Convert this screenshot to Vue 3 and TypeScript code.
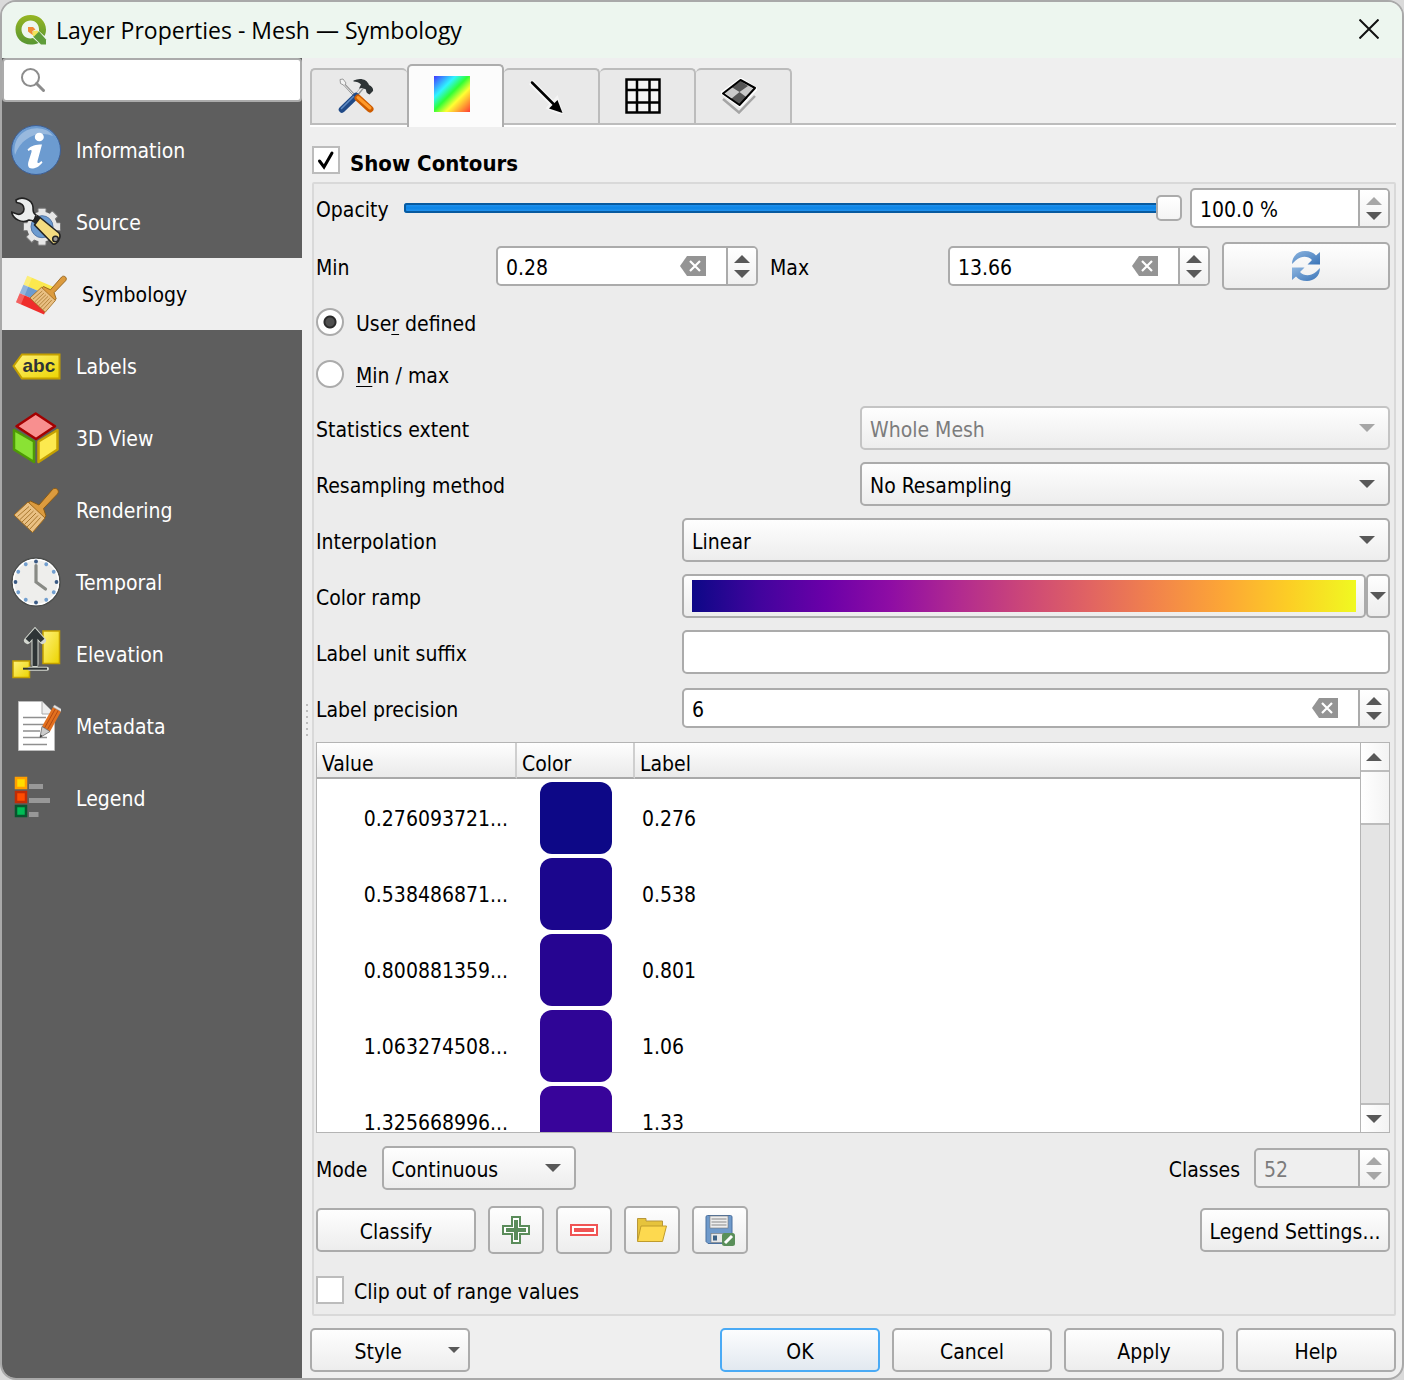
<script setup lang="ts">
import { ref } from 'vue'

interface NavItem {
  id: string
  label: string
}

interface RampRow {
  value: string
  color: string
  label: string
}

const navItems: NavItem[] = [
  { id: 'information', label: 'Information' },
  { id: 'source', label: 'Source' },
  { id: 'symbology', label: 'Symbology' },
  { id: 'labels', label: 'Labels' },
  { id: 'view3d', label: '3D View' },
  { id: 'rendering', label: 'Rendering' },
  { id: 'temporal', label: 'Temporal' },
  { id: 'elevation', label: 'Elevation' },
  { id: 'metadata', label: 'Metadata' },
  { id: 'legend', label: 'Legend' },
]

const tabs: NavItem[] = [
  { id: 'settings', label: 'Settings' },
  { id: 'contours', label: 'Contours' },
  { id: 'vectors', label: 'Vectors' },
  { id: 'rendering', label: 'Mesh rendering' },
  { id: 'averaging', label: 'Averaging' },
]

const rows: RampRow[] = [
  { value: '0.276093721...', color: '#0d0887', label: '0.276' },
  { value: '0.538486871...', color: '#1b068d', label: '0.538' },
  { value: '0.800881359...', color: '#260591', label: '0.801' },
  { value: '1.063274508...', color: '#2f0596', label: '1.06' },
  { value: '1.325668996...', color: '#38049a', label: '1.33' },
]

const activeNav = ref('symbology')
const activeTab = ref('contours')
const search = ref('')
const showContours = ref(true)
const opacity = ref(100)
const min = ref('0.28')
const max = ref('13.66')
const extentMode = ref('user')
const suffix = ref('')
const precision = ref('6')
const clip = ref(false)

const gearTeeth = [0, 45, 90, 135, 180, 225, 270, 315]
const clockMarks = [0, 30, 60, 90, 120, 150, 180, 210, 240, 270, 300, 330]
</script>

<template>
  <div class="dialog">
    <header class="titlebar">
      <svg class="logo" viewBox="0 0 32 32" aria-hidden="true">
        <defs>
          <linearGradient id="q-green" x1="0" y1="0" x2="0" y2="1">
            <stop offset="0" stop-color="#96b522" />
            <stop offset="1" stop-color="#579632" />
          </linearGradient>
        </defs>
        <path
          d="M15.500 1C24 1 31 7 31 15.500C31 18 30.500 20 29.500 22L24 17C24.500 11 21 6.500 15.500 6.500C10.500 6.500 6.500 10.500 6.500 15.500C6.500 20.500 10.500 24.500 15.500 24.500L18 24L23.500 29C21 30 18.500 30.500 15.500 30.500C7 30.500 .5 24 .5 15.500C.5 7 7 1 15.500 1Z"
          fill="url(#q-green)"
        />
        <path d="M21 18L24 17.500L31 25.500V30.500H26L18.500 23V20Z" fill="#5f9d3a" />
        <path d="M18 17L22.500 16.500L23.500 18L19 22.500L17 20.500Z" fill="#f3e35a" />
        <path d="M13 13H18L20.500 15.500L17.500 17V21L13 17.500Z" fill="#f08a35" />
      </svg>
      <h1>Layer Properties - Mesh — Symbology</h1>
      <button class="close" type="button" aria-label="Close">
        <svg viewBox="0 0 20 20"><path d="M.5 .5L19.500 19.500M19.500 .5L.5 19.500" fill="none" stroke="#111" stroke-width="2" /></svg>
      </button>
    </header>

    <div class="body">
      <aside class="sidebar">
        <div class="search">
          <svg viewBox="0 0 26 26" aria-hidden="true">
            <circle cx="10.500" cy="10.500" r="8.500" fill="none" stroke="#8c8c8c" stroke-width="2" />
            <path d="M16.500 16.500L23.500 23.500" stroke="#8c8c8c" stroke-width="3" stroke-linecap="round" />
          </svg>
          <input v-model="search" type="text" aria-label="Search" />
        </div>
        <nav>
          <button
            v-for="item in navItems"
            :key="item.id"
            type="button"
            :class="{ active: activeNav === item.id }"
            @click="activeNav = item.id"
          >
            <svg v-if="item.id === 'information'" viewBox="0 0 50 50">
              <circle cx="25" cy="25" r="24.500" fill="#6c9bd0" stroke="#3d5f95" />
              <path d="M4 30C1 14 13 2 28 3.500C36 4 40 8 42 11C28 5 10 12 4 30Z" fill="#fff" opacity=".3" />
              <ellipse cx="28.300" cy="12" rx="4.500" ry="4.300" fill="#fff" />
              <path d="M16.500 24.500C20 20.500 25 19.500 31 19.500L26.500 36C26 39 28 38.500 30.500 36L31.500 37.500C28 42 24 43.500 21 43.500C17 43.500 16.500 40 17.500 36.500L20.500 27C21 24.500 19.500 24.500 17.500 26Z" fill="#fff" />
            </svg>

            <svg v-else-if="item.id === 'source'" viewBox="0 0 50 50">
              <g transform="translate(31 29.700)">
                <rect v-for="a in gearTeeth" :key="a" x="-4" y="-18.500" width="8" height="9" rx="1" fill="#e6e6e6" stroke="#777" :transform="`rotate(${a})`" />
                <circle r="15" fill="#e6e6e6" />
                <circle r="11" fill="#6c9bd0" stroke="#5577a5" />
              </g>
              <path d="M5 3C11 -1 21 2 22 10C22 14 22 16 25 18L23 24L18 23C11 27 2 22 .5 15L6 17C10 18.500 13 15 13 12C13 8 10 6 5.500 5.500Z" fill="#eceeee" stroke="#222" stroke-width="1.600" stroke-linejoin="round" />
              <path d="M23.500 28L29 20.500L48 36C51 40 46 48 42 47Z" fill="#f3dc80" stroke="#222" stroke-width="1.600" stroke-linejoin="round" />
              <path d="M22.500 25.500L28 19" stroke="#222" stroke-width="4" />
              <circle cx="44.500" cy="42" r="2.800" fill="#999" stroke="#222" stroke-width="1.500" />
            </svg>

            <svg v-else-if="item.id === 'symbology'" class="wide" viewBox="0 0 56 50">
              <path d="M16.300 6.700L44 18.500L40.500 27.500L12.500 15.700Z" fill="#fbe84e" />
              <path d="M12.500 15.700L40.500 27.500L37 36.500L8.800 24.300Z" fill="#6c9bd0" />
              <path d="M8.800 24.300L37 36.500L33 45.500L5 33.300Z" fill="#ef2d2b" />
              <path d="M16.300 6.700L21 8.700L10 35.300L5 33.300Z" fill="#fff" opacity=".25" />
              <g transform="translate(16.500 4.400) scale(.82)">
                <path d="M28 20L41.500 4.500C44 1.500 49.500 5 46.500 9L32.500 23.500L35 31L32 34.500L16 19L19.500 16Z" fill="#dc9b3e" stroke="#8a5a14" stroke-linejoin="round" />
                <path d="M17 17L34 33L21.500 47.500L3 30Z" fill="#e9c083" stroke="#a06a1c" stroke-linejoin="round" />
                <path d="M18 21.500L6.500 31.500M20 24L9 34.500M22.500 26L11 37M25 28L13.500 39.500M27 30.500L16 42M29.500 32.500L18.500 44.500" stroke="#a8782f" />
              </g>
            </svg>

            <svg v-else-if="item.id === 'labels'" viewBox="0 0 50 50">
              <defs>
                <linearGradient id="tag-y" x1="0" y1="0" x2="1" y2="1">
                  <stop offset="0" stop-color="#fff27c" />
                  <stop offset="1" stop-color="#ecd400" />
                </linearGradient>
              </defs>
              <path d="M2.500 25L11 13.500H48.500V37.500H11Z" fill="url(#tag-y)" stroke="#c4a000" stroke-width="2" />
              <text x="11.500" y="31" class="tag-text">abc</text>
            </svg>

            <svg v-else-if="item.id === 'view3d'" class="spill" viewBox="0 0 50 50">
              <path d="M3 17L23 28.500V49L3 36.500Z" fill="#8ae234" stroke="#4e9a06" stroke-width="2.500" stroke-linejoin="round" />
              <path d="M46.500 17L27.500 28.500V49L46.500 36.500Z" fill="#fce94f" stroke="#c4a000" stroke-width="2.500" stroke-linejoin="round" />
              <path d="M24.700 .5L44 13.300L25 26L5.500 13.300Z" fill="#f88f8f" stroke="#a40000" stroke-width="2.500" stroke-linejoin="round" />
            </svg>

            <svg v-else-if="item.id === 'rendering'" viewBox="0 0 50 50">
              <path d="M28 20L41.500 4.500C44 1.500 49.500 5 46.500 9L32.500 23.500L35 31L32 34.500L16 19L19.500 16Z" fill="#dc9b3e" stroke="#8a5a14" stroke-linejoin="round" />
              <path d="M17 17L34 33L21.500 47.500L3 30Z" fill="#e9c083" stroke="#a06a1c" stroke-linejoin="round" />
              <path d="M18 21.500L6.500 31.500M20 24L9 34.500M22.500 26L11 37M25 28L13.500 39.500M27 30.500L16 42M29.500 32.500L18.500 44.500" stroke="#a8782f" />
            </svg>

            <svg v-else-if="item.id === 'temporal'" viewBox="0 0 50 50">
              <circle cx="25" cy="25" r="24" fill="#eeeeec" stroke="#4b4d4c" stroke-width="1.500" />
              <circle cx="25" cy="25" r="22.500" fill="none" stroke="#fff" stroke-width="1.500" />
              <g transform="translate(25 25)">
                <circle v-for="a in clockMarks" :key="a" cy="-20.500" r="1.900" :fill="a % 90 ? '#729fcf' : '#3a5a85'" :transform="`rotate(${a})`" />
              </g>
              <path d="M25 8.500V25L34.500 32" fill="none" stroke="#888a85" stroke-width="3.200" stroke-linecap="round" />
            </svg>

            <svg v-else-if="item.id === 'elevation'" class="spill" viewBox="0 0 50 50">
              <rect x="32" y="2" width="16.500" height="32.500" fill="url(#tag-y)" stroke="#c4a000" stroke-width="1.500" />
              <rect x="2" y="32" width="16.500" height="16.500" fill="url(#tag-y)" stroke="#c4a000" stroke-width="1.500" />
              <path d="M24 35V3M16.500 11.500L24 3L31.500 11.500" fill="none" stroke="#d3d7cf" stroke-width="7" stroke-linecap="round" />
              <path d="M18.500 39.700H36" stroke="#d3d7cf" stroke-width="4" stroke-linecap="round" />
              <path d="M24 37V3M16.500 11.500L24 3L31.500 11.500" fill="none" stroke="#2e3436" stroke-width="5" />
              <path d="M12 39.700H36" stroke="#2e3436" stroke-width="2" />
            </svg>

            <svg v-else-if="item.id === 'metadata'" viewBox="0 0 50 50">
              <path d="M7.500 .5H31L43.500 13V49.500H7.500Z" fill="#fff" stroke="#bbb" />
              <path d="M31 .5V13H43.500" fill="#eee" stroke="#aaa" />
              <path d="M12 16.500H35M12 23.500H33M12 30H29M12 36.500H36M12 43.500H36" stroke="#8f8f8f" stroke-width="1.600" />
              <path d="M31 25.500L42 6L50 10.500L39 30.500Z" fill="#e2701f" />
              <path d="M33.500 27L44.500 7.500M36.500 28.500L47.500 9" stroke="#b44a12" />
              <path d="M42 6L43.500 4L51 8.500L50 10.500Z" fill="#e6e6e6" stroke="#aaa" stroke-width=".5" />
              <path d="M31 25.500L39 30.500L29 36.500Z" fill="#ccc" stroke="#666" stroke-width=".8" />
              <path d="M29.500 33.500L31.500 35L29 36.500Z" fill="#333" />
            </svg>

            <svg v-else viewBox="0 0 50 50">
              <rect x="5" y="5" width="10" height="10" fill="#fd0" stroke="#ff9f00" stroke-width="2.500" />
              <rect x="5" y="19" width="10" height="10" fill="#ff4d00" stroke="#bf2c06" stroke-width="2.500" />
              <rect x="5" y="33" width="10" height="10" fill="#00bd55" stroke="#07562d" stroke-width="2.500" />
              <path d="M18 13.500H32M18 27.500H39M18 41.500H27.500" stroke="#989898" stroke-width="5" />
            </svg>
            <span>{{ item.label }}</span>
          </button>
        </nav>
      </aside>

      <div class="splitter" aria-hidden="true"><i v-for="n in 6" :key="n"></i></div>

      <main>
        <div class="tabs" role="tablist">
          <button
            v-for="tab in tabs"
            :key="tab.id"
            type="button"
            role="tab"
            :aria-label="tab.label"
            :aria-selected="activeTab === tab.id"
            :class="{ active: activeTab === tab.id }"
            @click="activeTab = tab.id"
          >
            <svg v-if="tab.id === 'settings'" viewBox="0 0 36 36">
              <path d="M3 3L17 18" stroke="#888" stroke-width="2.500" />
              <path d="M2 1.500L5 1L8 5L6.500 7.500L2.500 5.500Z" fill="#f2f2f2" stroke="#888" stroke-width=".8" />
              <path d="M5 5.500L16.500 17.500" stroke="#eee" stroke-width="1" />
              <path d="M25 9L18.500 17" stroke="#8f9294" stroke-width="3.500" />
              <path d="M24.500 9L18.500 16" stroke="#eee" stroke-width="1.500" />
              <path d="M15.500 2.500C22 -.5 29 1 31 7C34 8.500 35.500 10.500 35 13L31.500 16.500C28.500 15.500 28 13.500 28 11.500L24.500 10L21 10.500L23 6.500C21.500 4.500 18.500 3.500 15.500 3.500Z" fill="#2e3436" />
              <path d="M18 18L4 31.500" stroke="#204a87" stroke-width="6.500" stroke-linecap="round" />
              <path d="M15.500 18.500L3.500 30.500" stroke="#5f8bc4" stroke-width="1.500" stroke-linecap="round" />
              <path d="M20 20L32 31" stroke="#ce5c00" stroke-width="7" stroke-linecap="round" />
              <path d="M20 19.500L32 30" stroke="#ff9a2a" stroke-width="3" stroke-linecap="round" />
            </svg>
            <i v-else-if="tab.id === 'contours'" class="rainbow"></i>
            <svg v-else-if="tab.id === 'vectors'" viewBox="0 0 36 36">
              <path d="M2 4L23 25" stroke="#fff" stroke-width="6" opacity=".6" />
              <path d="M33 36L19 30L28 20Z" fill="#fff" stroke="#fff" stroke-width="3" opacity=".5" />
              <path d="M3 4.500L25 26.500" stroke="#000" stroke-width="2.500" stroke-linecap="round" />
              <path d="M33.500 35L20 30.500L28.500 22Z" fill="#000" />
            </svg>
            <svg v-else-if="tab.id === 'rendering'" viewBox="0 0 36 36">
              <path d="M0 0H36V36H0Z" fill="#f4f4f4" />
              <path d="M1.500 1.500H34.500V34.500H1.500ZM12 1V35M24.500 1V35M1 12H35M1 24.500H35" fill="none" stroke="#000" stroke-width="2.500" />
            </svg>
            <svg v-else viewBox="0 0 36 36">
              <path d="M2 21L18 34.500L34 18" fill="none" stroke="#a5a5a5" stroke-width="2.500" />
              <path d="M20 1L35 11L19 28L1 15Z" fill="#c9c9c9" stroke="#fff" stroke-width="3" />
              <path d="M19.500 3L27 8L18.500 14L10.500 9ZM18.500 14L26.500 20L19 27L10 21Z" fill="#555" />
              <path d="M19.500 2L34 10L18.500 27L2 15.500Z" fill="none" stroke="#000" stroke-width="2" stroke-linejoin="round" />
            </svg>
          </button>
        </div>

        <label class="check group-check">
          <span class="box">
            <input v-model="showContours" type="checkbox" />
            <svg v-if="showContours" viewBox="0 0 28 28"><path d="M7.500 15L12 21L20 7" fill="none" stroke="#000" stroke-width="3" stroke-linecap="round" /></svg>
          </span>
          <b>Show Contours</b>
        </label>

        <section class="group">
          <div class="row opacity-row">
            <label for="opacity">Opacity</label>
            <input id="opacity" v-model="opacity" class="slider" type="range" min="0" max="100" />
            <div class="spin">
              <input type="text" value="100.0 %" aria-label="Opacity percent" />
              <span class="steps">
                <button type="button" disabled aria-label="Increase opacity"><svg viewBox="0 0 16 8"><path d="M8 0L16 8H0Z" /></svg></button>
                <button type="button" aria-label="Decrease opacity"><svg viewBox="0 0 16 8"><path d="M0 0H16L8 8Z" /></svg></button>
              </span>
            </div>
          </div>

          <div class="range-row">
            <label for="min">Min</label>
            <div class="spin">
              <input id="min" v-model="min" type="text" />
              <button class="clear" type="button" aria-label="Clear minimum" @click="min = ''">
                <svg viewBox="0 0 26 20"><path d="M0 10L7 0H26V20H7Z" fill="#949494" /><path d="M10 5L20 15M20 5L10 15" stroke="#fff" stroke-width="2.200" /></svg>
              </button>
              <span class="steps">
                <button type="button" aria-label="Increase minimum"><svg viewBox="0 0 16 8"><path d="M8 0L16 8H0Z" /></svg></button>
                <button type="button" aria-label="Decrease minimum"><svg viewBox="0 0 16 8"><path d="M0 0H16L8 8Z" /></svg></button>
              </span>
            </div>
            <label for="max">Max</label>
            <div class="spin">
              <input id="max" v-model="max" type="text" />
              <button class="clear" type="button" aria-label="Clear maximum" @click="max = ''">
                <svg viewBox="0 0 26 20"><path d="M0 10L7 0H26V20H7Z" fill="#949494" /><path d="M10 5L20 15M20 5L10 15" stroke="#fff" stroke-width="2.200" /></svg>
              </button>
              <span class="steps">
                <button type="button" aria-label="Increase maximum"><svg viewBox="0 0 16 8"><path d="M8 0L16 8H0Z" /></svg></button>
                <button type="button" aria-label="Decrease maximum"><svg viewBox="0 0 16 8"><path d="M0 0H16L8 8Z" /></svg></button>
              </span>
            </div>
            <button class="btn tall" type="button" aria-label="Reload">
              <svg class="reload" viewBox="0 0 28 30">
                <defs>
                  <linearGradient id="blue-arrow" x1="0" y1="0" x2="1" y2="1">
                    <stop offset="0" stop-color="#8db5df" />
                    <stop offset="1" stop-color="#3a74b8" />
                  </linearGradient>
                </defs>
                <path d="M0 13C0 5 6 0 13 0C18 0 21.500 1.500 24 4.500L28 1V13.500H15.500L20 9C17 5.500 12 5 8.500 6.500C4.500 8 3 10 0 13Z" fill="url(#blue-arrow)" />
                <path d="M28 17C28 25 22 30 15 30C10 30 6.500 28.500 4 25.500L0 29V16.500H12.500L8 21C11 24.500 16 25 19.500 23.500C23.500 22 25 20 28 17Z" fill="url(#blue-arrow)" />
              </svg>
            </button>
          </div>

          <div class="radios">
            <label class="radio"><input v-model="extentMode" type="radio" name="extent" value="user" /><span>Use<u>r</u> defined</span></label>
            <label class="radio"><input v-model="extentMode" type="radio" name="extent" value="minmax" /><span><u>M</u>in / max</span></label>
          </div>

          <div class="fields half">
            <label for="stats">Statistics extent</label>
            <span class="combo">
              <select id="stats" disabled><option>Whole Mesh</option></select>
              <svg viewBox="0 0 16 8"><path d="M0 0H16L8 8Z" /></svg>
            </span>
            <label for="resampling">Resampling method</label>
            <span class="combo">
              <select id="resampling"><option>No Resampling</option></select>
              <svg viewBox="0 0 16 8"><path d="M0 0H16L8 8Z" /></svg>
            </span>
          </div>

          <div class="fields">
            <label for="interpolation">Interpolation</label>
            <span class="combo">
              <select id="interpolation"><option>Linear</option></select>
              <svg viewBox="0 0 16 8"><path d="M0 0H16L8 8Z" /></svg>
            </span>
            <label for="ramp">Color ramp</label>
            <span class="ramp">
              <button id="ramp" class="btn ramp-main" type="button"><i></i></button>
              <button class="btn ramp-menu" type="button" aria-label="Choose color ramp"><svg viewBox="0 0 16 8"><path d="M0 0H16L8 8Z" /></svg></button>
            </span>
            <label for="suffix">Label unit suffix</label>
            <input id="suffix" v-model="suffix" class="line" type="text" />
            <label for="precision">Label precision</label>
            <div class="spin">
              <input id="precision" v-model="precision" type="text" />
              <button class="clear" type="button" aria-label="Clear precision" @click="precision = ''">
                <svg viewBox="0 0 26 20"><path d="M0 10L7 0H26V20H7Z" fill="#949494" /><path d="M10 5L20 15M20 5L10 15" stroke="#fff" stroke-width="2.200" /></svg>
              </button>
              <span class="steps">
                <button type="button" aria-label="Increase precision"><svg viewBox="0 0 16 8"><path d="M8 0L16 8H0Z" /></svg></button>
                <button type="button" aria-label="Decrease precision"><svg viewBox="0 0 16 8"><path d="M0 0H16L8 8Z" /></svg></button>
              </span>
            </div>
          </div>

          <div class="table-box">
            <div class="table-view">
              <table>
                <colgroup><col class="c-value" /><col class="c-color" /><col /></colgroup>
                <thead>
                  <tr><th>Value</th><th>Color</th><th>Label</th></tr>
                </thead>
                <tbody>
                  <tr v-for="row in rows" :key="row.value">
                    <td class="value">{{ row.value }}</td>
                    <td class="color"><i :style="{ background: row.color }"></i></td>
                    <td class="name">{{ row.label }}</td>
                  </tr>
                </tbody>
              </table>
            </div>
            <div class="scrollbar">
              <button type="button" aria-label="Scroll up"><svg viewBox="0 0 16 8"><path d="M8 0L16 8H0Z" /></svg></button>
              <div class="trough"><i></i></div>
              <button type="button" aria-label="Scroll down"><svg viewBox="0 0 16 8"><path d="M0 0H16L8 8Z" /></svg></button>
            </div>
          </div>

          <div class="row mode-row">
            <label for="mode">Mode</label>
            <span class="combo mode">
              <select id="mode"><option>Continuous</option></select>
              <svg viewBox="0 0 16 8"><path d="M0 0H16L8 8Z" /></svg>
            </span>
            <label class="push" for="classes">Classes</label>
            <div class="spin off">
              <input id="classes" type="text" value="52" disabled />
              <span class="steps">
                <button type="button" disabled aria-label="More classes"><svg viewBox="0 0 16 8"><path d="M8 0L16 8H0Z" /></svg></button>
                <button type="button" disabled aria-label="Fewer classes"><svg viewBox="0 0 16 8"><path d="M0 0H16L8 8Z" /></svg></button>
              </span>
            </div>
          </div>

          <div class="row tools-row">
            <button class="btn std" type="button"><span>Classify</span></button>
            <button class="btn tool" type="button" aria-label="Add value">
              <svg viewBox="0 0 32 32">
                <path d="M12 3H20V12H29V20H20V29H12V20H3V12H12Z" fill="#fff" stroke="#5a8c5a" stroke-width="2" />
                <path d="M16 6V26M6 16H26" stroke="#5a8c5a" stroke-width="4" />
              </svg>
            </button>
            <button class="btn tool" type="button" aria-label="Remove value">
              <svg viewBox="0 0 32 32">
                <rect x="3" y="11" width="26" height="10" fill="#fff" stroke="#f05454" stroke-width="2" />
                <rect x="6" y="14" width="20" height="4" fill="#f05454" />
              </svg>
            </button>
            <button class="btn tool" type="button" aria-label="Load color map">
              <svg viewBox="0 0 32 32">
                <path d="M1.500 27V4.500H10V7H26.500V12" fill="#e6c33c" stroke="#b8973a" />
                <path d="M1.500 27.500L5 12H30.500L26.500 27.500Z" fill="#fdd94f" stroke="#c09c2c" stroke-linejoin="round" />
              </svg>
            </button>
            <button class="btn tool" type="button" aria-label="Save color map">
              <svg viewBox="0 0 32 32">
                <path d="M2 3Q2 1.500 3.500 1.500H26.500Q28 1.500 28 3V29.500H4L2 27.500Z" fill="#6f9acb" stroke="#4a709f" />
                <rect x="6" y="2" width="18" height="12" fill="#eee" stroke="#777" stroke-width=".6" />
                <path d="M7.500 5H22.500M7.500 8H22.500M7.500 11H22.500" stroke="#888" stroke-width="1.200" />
                <rect x="7" y="19.500" width="15" height="9" fill="#e8e8e8" stroke="#777" stroke-width=".6" />
                <rect x="9" y="21.500" width="4" height="5" fill="#3c6186" />
                <rect x="18" y="19" width="13" height="13" rx="2.500" fill="#5a8f5a" />
                <path d="M21 29L28 22" stroke="#fff" stroke-width="3" />
              </svg>
            </button>
            <button class="btn legend push" type="button"><span>Legend Settings...</span></button>
          </div>

          <label class="check clip-check">
            <span class="box">
              <input v-model="clip" type="checkbox" />
              <svg v-if="clip" viewBox="0 0 28 28"><path d="M7.500 15L12 21L20 7" fill="none" stroke="#000" stroke-width="3" stroke-linecap="round" /></svg>
            </span>
            <span>Clip out of range values</span>
          </label>
        </section>

        <footer>
          <button class="btn std style-btn" type="button">
            <span>Style</span>
            <svg viewBox="0 0 12 6"><path d="M0 0H12L6 6Z" /></svg>
          </button>
          <button class="btn std default push" type="button"><span>OK</span></button>
          <button class="btn std" type="button"><span>Cancel</span></button>
          <button class="btn std" type="button"><span>Apply</span></button>
          <button class="btn std" type="button"><span>Help</span></button>
        </footer>
      </main>
    </div>
  </div>
</template>

<style>
html {
  background: #dadada;
}
</style>

<style scoped>
* {
  box-sizing: border-box;
}
.dialog {
  display: flex;
  flex-direction: column;
  min-height: 100vh;
  border: 2px solid #a9a9a9;
  border-radius: 16px;
  overflow: hidden;
  background: #efefef;
  color: #000;
  font: 21px/28px "DejaVu Sans Condensed", "DejaVu Sans", "Noto Sans", sans-serif;
}
button,
input,
select {
  font: inherit;
  color: inherit;
  margin: 0;
  padding: 0;
  border: 0;
  border-radius: 0;
  background: none;
  outline: none;
}
svg {
  display: block;
  flex: none;
}
.titlebar {
  display: flex;
  align-items: center;
  height: 56px;
  padding: 0 23px 0 13px;
  background: #edf6ef;
}
.logo {
  width: 32px;
  height: 32px;
}
.titlebar h1 {
  flex: 1;
  margin: 0 0 0 9px;
  font: 400 23px/32px "Open Sans", "Noto Sans", sans-serif;
}
.close {
  padding-bottom: 2px;
}
.close svg {
  width: 20px;
  height: 20px;
}
.body {
  flex: 1;
  display: flex;
}

/* Sidebar */
.sidebar {
  flex: none;
  width: 300px;
  background: #5e5e5e;
}
.search {
  display: flex;
  align-items: center;
  height: 44px;
  margin-bottom: 12px;
  padding: 0 8px 0 16px;
  border: 2px solid #ababab;
  border-radius: 4px;
  background: #fff;
}
.search svg {
  width: 26px;
  height: 26px;
}
.search input {
  flex: 1;
  min-width: 0;
  margin-left: 8px;
}
nav {
  display: flex;
  flex-direction: column;
}
nav button {
  display: flex;
  align-items: center;
  gap: 15px;
  height: 72px;
  padding-left: 9px;
  color: #fff;
  text-align: left;
}
nav button.active {
  background: #efefef;
  color: #000;
}
nav span {
  padding-top: 2px;
}
nav svg {
  width: 50px;
  height: 50px;
}
nav svg.wide {
  width: 56px;
}
nav svg.spill {
  overflow: visible;
}
.tag-text {
  font: bold 19px "Liberation Sans", sans-serif;
  fill: #2e3436;
}
.splitter {
  flex: none;
  width: 8px;
  display: flex;
  flex-direction: column;
  justify-content: center;
  align-items: center;
  gap: 4px;
  padding: 4px 0 0 2px;
}
.splitter i {
  width: 2px;
  height: 2px;
  background: #bdbdbd;
}

/* Tabs */
main {
  flex: 1;
  min-width: 0;
  display: flex;
  flex-direction: column;
  padding: 6px 6px 6px 0;
}
.tabs {
  display: flex;
  align-items: flex-end;
  height: 61px;
  border-bottom: 2px solid #bcbcbc;
  box-shadow: 0 2px 0 #fff;
}
.tabs button {
  width: 96px;
  height: 55px;
  display: flex;
  align-items: center;
  justify-content: center;
  padding: 0 8px 2px 0;
  border: 2px solid #bcbcbc;
  border-bottom: 0;
  border-left-width: 0;
  border-radius: 5px 5px 0 0;
  background: #e9e9e9;
}
.tabs button:first-child {
  width: 97px;
  border-left-width: 2px;
}
.tabs button:has(+ .active) {
  border-right: 0;
}
.tabs button.active {
  width: 97px;
  height: 63px;
  margin-bottom: -4px;
  padding-bottom: 6px;
  border-left-width: 2px;
  border-color: #adadad;
  background: #fcfcfc;
}
.tabs svg,
.rainbow {
  width: 36px;
  height: 36px;
}
.rainbow {
  background: linear-gradient(135deg, #4237ff, #30f4ff 30%, #2fff35 48%, #ffff33 66%, #ff3b33);
}

/* Check boxes and radio buttons */
.check {
  display: flex;
  align-items: center;
  gap: 10px;
}
.box {
  display: grid;
  width: 28px;
  height: 28px;
}
.box > * {
  grid-area: 1 / 1;
  width: 28px;
  height: 28px;
}
.box svg {
  pointer-events: none;
}
.box input {
  appearance: none;
  border: 2px solid #bcbcbc;
  background: #fff;
}
.group-check {
  align-self: flex-start;
  height: 28px;
  margin: 21px 0 8px 2px;
}
.group-check b {
  padding-top: 8px;
  font-size: 22px;
  line-height: 20px;
}
.radios {
  display: flex;
  flex-direction: column;
  align-items: flex-start;
  gap: 24px;
  margin: 18px 0;
}
.radio {
  display: flex;
  align-items: center;
  gap: 12px;
  height: 28px;
}
.radio input {
  appearance: none;
  width: 28px;
  height: 28px;
  border: 2px solid #ababab;
  border-radius: 50%;
  background: #fff;
}
.radio input:checked {
  background: radial-gradient(circle, #505050 4px, #2b2b2b 5px, #2b2b2b 6px, #fff 7px);
}
.radio > span,
.clip-check > span:last-child {
  padding-top: 4px;
  line-height: 24px;
}
u {
  text-decoration-thickness: 1px;
  text-underline-offset: 3px;
}

/* Group box */
.group {
  flex: 1;
  display: flex;
  flex-direction: column;
  margin-left: 2px;
  padding: 4px 4px 10px 2px;
  border: 2px solid #d9d9d9;
  border-radius: 2px;
  background: #ececec;
}
.row {
  display: flex;
  align-items: center;
  gap: 12px;
}
.row > label,
.range-row > label,
.fields > label,
.btn > span {
  padding-top: 4px;
}
.push {
  margin-left: auto;
}
.opacity-row {
  gap: 8px;
  margin-bottom: 14px;
}
.opacity-row label {
  width: 80px;
}
.opacity-row .spin {
  width: 200px;
}
.slider {
  appearance: none;
  flex: 1;
  min-width: 0;
  height: 26px;
}
.slider::-webkit-slider-runnable-track {
  height: 10px;
  border-radius: 3px;
  background: linear-gradient(#2a97f2, #0d85e6 50%, #2f9bf5);
  box-shadow: inset 0 0 0 2px #085a9f;
}
.slider::-webkit-slider-thumb {
  appearance: none;
  width: 26px;
  height: 26px;
  margin-top: -8px;
  border: 2px solid #ababab;
  border-radius: 5px;
  background: linear-gradient(#fff, #f4f4f4);
}
.range-row {
  display: grid;
  grid-template-columns: 168px 1fr 166px 1fr 168px;
  column-gap: 12px;
  align-items: center;
}
.spin {
  display: flex;
  align-items: center;
  height: 40px;
  border: 2px solid #ababab;
  border-radius: 5px;
  background: #fff;
  overflow: hidden;
}
.spin input {
  flex: 1;
  min-width: 0;
  height: 36px;
  padding: 4px 0 0 8px;
}
.clear {
  flex: none;
  margin-right: 20px;
}
.clear svg {
  width: 26px;
  height: 20px;
}
.steps {
  flex: none;
  width: 30px;
  height: 36px;
  display: grid;
  grid-template-rows: 1fr 1fr;
  border-left: 2px solid #ababab;
  background: linear-gradient(#fff, #f0f0f0);
}
.steps button {
  display: flex;
  align-items: flex-end;
  justify-content: center;
  padding-bottom: 3px;
}
.steps button + button {
  align-items: flex-start;
  padding: 4px 0 0;
}
.steps svg,
.combo svg,
.ramp-menu svg,
.scrollbar svg {
  width: 16px;
  height: 8px;
  fill: #585858;
}
.steps button:disabled svg {
  fill: #a6a6a6;
}
.spin.off {
  width: 136px;
  background: #efefef;
  color: #7c7c7c;
}
.btn {
  display: flex;
  align-items: center;
  justify-content: center;
  height: 44px;
  border: 2px solid #ababab;
  border-radius: 5px;
  background: linear-gradient(#fefefe, #ededed);
}
.tall {
  height: 48px;
}
.reload {
  width: 28px;
  height: 30px;
}
.fields {
  display: grid;
  grid-template-columns: 366px 1fr;
  row-gap: 12px;
  align-items: center;
}
.fields.half {
  grid-template-columns: 544px 1fr;
  margin-bottom: 12px;
}
.fields .spin {
  margin: 2px 0;
}
.combo {
  display: grid;
}
.combo > * {
  grid-area: 1 / 1;
}
.combo select {
  appearance: none;
  width: 100%;
  height: 44px;
  padding: 4px 40px 0 8px;
  border: 2px solid #ababab;
  border-radius: 5px;
  background: linear-gradient(#fefefe, #ededed);
}
.combo select:disabled {
  border-color: #c4c4c4;
  color: #7c7c7c;
  opacity: 1;
}
.combo svg {
  place-self: center end;
  margin-right: 15px;
  pointer-events: none;
}
.combo select:disabled + svg {
  fill: #a6a6a6;
}
.combo.mode {
  width: 194px;
}
.ramp {
  display: flex;
}
.ramp-main {
  flex: 1;
  padding: 0 8px;
}
.ramp-main i {
  flex: 1;
  height: 32px;
  background: linear-gradient(90deg, #0d0887, #41049d, #6a00a8, #8f0da4, #b12a90, #cc4778, #e16462, #f2844b, #fca636, #fcce25, #f0f921);
}
.ramp-menu {
  width: 24px;
}
.line {
  height: 44px;
  padding: 0 8px;
  border: 2px solid #ababab;
  border-radius: 5px;
  background: #fff;
}

/* Color table */
.table-box {
  flex: 1 1 0;
  min-height: 240px;
  display: flex;
  margin: 12px 0 13px;
  border: 1px solid #b4b4b4;
  background: #fff;
}
.table-view {
  flex: 1;
  min-width: 0;
  height: 0;
  min-height: 100%;
  overflow: hidden;
}
table {
  width: 100%;
  table-layout: fixed;
  border-collapse: separate;
  border-spacing: 0;
}
.c-value {
  width: 200px;
}
.c-color {
  width: 118px;
}
th {
  height: 36px;
  padding: 8px 0 0 5px;
  border-right: 2px solid #cfcfcf;
  border-bottom: 2px solid #a9a9a9;
  background: linear-gradient(#fefefe, #eaeaea);
  font-weight: 400;
  line-height: 24px;
  text-align: left;
}
th:last-child {
  border-right: 0;
}
td {
  height: 76px;
  padding: 4px 0 0;
  line-height: 18px;
}
td.value {
  padding-right: 9px;
  text-align: right;
}
td.color {
  padding: 3px 0 0 23px;
  vertical-align: top;
}
td.color i {
  display: block;
  width: 72px;
  height: 72px;
  border-radius: 12px;
}
td.name {
  padding-left: 7px;
}
.scrollbar {
  flex: none;
  width: 29px;
  display: flex;
  flex-direction: column;
  border-left: 1px solid #b4b4b4;
}
.scrollbar button {
  height: 27px;
  display: flex;
  align-items: center;
  justify-content: center;
  padding-right: 2px;
  background: linear-gradient(90deg, #fff, #f3f3f3);
}
.scrollbar button:last-child {
  height: 29px;
  border-top: 2px solid #bcbcbc;
}
.trough {
  flex: 1;
  background: #e4e4e4;
}
.trough i {
  display: block;
  height: 55px;
  border: solid #bcbcbc;
  border-width: 2px 0;
  background: linear-gradient(90deg, #fff, #f3f3f3);
}

/* Bottom rows */
.mode-row {
  gap: 14px;
  margin-bottom: 16px;
}
.tools-row {
  margin-bottom: 22px;
}
.std {
  width: 160px;
}
.tool {
  width: 56px;
  height: 48px;
}
.tool svg {
  width: 32px;
  height: 32px;
}
.legend {
  width: 190px;
  white-space: nowrap;
}
.clip-check {
  align-self: flex-start;
}
footer {
  display: flex;
  gap: 12px;
  margin-top: 12px;
}
.style-btn {
  justify-content: flex-end;
  gap: 46px;
  padding-right: 8px;
}
.style-btn svg {
  width: 12px;
  height: 6px;
  fill: #585858;
}
.default {
  border-color: #4aaaf5;
  background: linear-gradient(#fcfdfe, #e2e9f0);
}
</style>
